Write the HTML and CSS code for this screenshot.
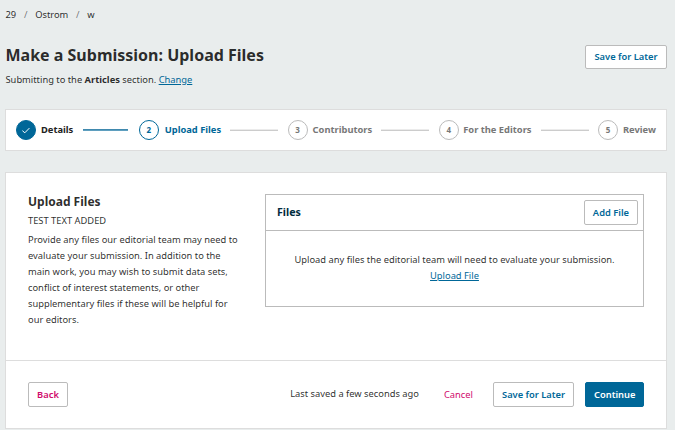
FILE: index.html
```html
<!DOCTYPE html>
<html lang="en">
<head>
<meta charset="utf-8">
<title>Make a Submission</title>
<link rel="stylesheet" href="styles.css">
</head>
<body>
<nav class="crumbs"><span>29</span><span class="sep">/</span><span>Ostrom</span><span class="sep">/</span><span>w</span></nav>
<header class="head">
  <div class="title">
    <h1>Make a Submission: Upload Files</h1>
    <p class="sub">Submitting to the <b>Articles</b> section. <a href="#">Change</a></p>
  </div>
  <button class="btn save-top">Save for Later</button>
</header>
<ol class="steps">
  <li class="step done"><span class="dot"><svg viewBox="0 0 10 10" width="10" height="10"><path d="M1.4 5.7 3.8 7.8 8.4 3.1" fill="none" stroke="#fff" stroke-width="1"/></svg></span><span class="label">Details</span></li>
  <li class="line past"></li>
  <li class="step current"><span class="dot">2</span><span class="label">Upload Files</span></li>
  <li class="line"></li>
  <li class="step"><span class="dot">3</span><span class="label">Contributors</span></li>
  <li class="line"></li>
  <li class="step editors"><span class="dot">4</span><span class="label">For the Editors</span></li>
  <li class="line"></li>
  <li class="step"><span class="dot">5</span><span class="label">Review</span></li>
</ol>
<main class="panel">
  <section class="content">
    <div class="intro">
      <h2>Upload Files</h2>
      <p class="test">TEST TEXT ADDED</p>
      <p>Provide any files our editorial team may need to<br>evaluate your submission. In addition to the<br>main work, you may wish to submit data sets,<br>conflict of interest statements, or other<br>supplementary files if these will be helpful for<br>our editors.</p>
    </div>
    <div class="files">
      <div class="files-head"><h3>Files</h3><button class="btn">Add File</button></div>
      <div class="files-body">Upload any files the editorial team will need to evaluate your submission.<br><a href="#">Upload File</a></div>
    </div>
  </section>
  <footer class="actions">
    <button class="btn back">Back</button>
    <span class="saved">Last saved a few seconds ago</span>
    <button class="cancel">Cancel</button>
    <button class="btn later">Save for Later</button>
    <button class="btn primary">Continue</button>
  </footer>
</main>
</body>
</html>
```
FILE: styles.css
```css
* { box-sizing: border-box; }
body {
  margin: 0;
  padding: 0 8px 0 5px;
  height: 430px;
  overflow: hidden;
  background: #e9eded;
  color: rgba(0, 0, 0, .84);
  font: 9.33px/16px "Noto Sans", sans-serif;
}
h1, h2, h3, p, ol { margin: 0; padding: 0; }
a { color: #006798; text-underline-offset: 1px; }
button { font-family: inherit; white-space: nowrap; }
.crumbs { display: flex; padding: 7px 0 0 .5px; height: 37px; }
.crumbs .sep { width: 19px; text-align: center; color: rgba(0, 0, 0, .54); }
.head { display: flex; justify-content: space-between; align-items: flex-start; height: 72px; }
.title { padding-left: .5px; }
h1 { font-size: 16px; line-height: 24px; padding-top: 6px; }
.sub { padding-top: 5px; }
.btn {
  height: 25px;
  padding: 0 8px;
  border: 1px solid #bbb;
  border-radius: 2px;
  background: #fff;
  color: #006798;
  font-size: 9.33px;
  font-weight: 600;
  line-height: 23px;
}
.save-top { width: 82px; height: 24px; margin-top: 8px; line-height: 22px; }
.steps {
  display: flex;
  align-items: center;
  height: 42px;
  padding: 0 10px;
  border: 1px solid #ddd;
  background: #fff;
  list-style: none;
}
.step { display: flex; align-items: center; color: #777; font-weight: 700; white-space: nowrap; }
.dot {
  display: flex;
  align-items: center;
  justify-content: center;
  width: 20px;
  height: 20px;
  margin-right: 5px;
  border: 1px solid #bbb;
  border-radius: 50%;
  font-size: 8px;
}
.done { color: #222; }
.done .dot { background: #006798; border-color: #006798; }
.current { color: #006798; }
.current .dot { border-color: #006798; margin-right: 6px; }
.editors .dot { margin-right: 4.5px; }
.line { flex: 1; height: 1px; margin: 0 9.5px 0 9px; background: #ccc; box-shadow: 0 -1px rgba(0, 0, 0, .08); }
.past {
  flex: 0 0 45px;
  margin: 0 10.6px 0 9.8px;
  background: #5f9fbf;
  box-shadow: 0 -1px #4089ae;
}
.panel { margin-top: 21px; height: 257px; border: 1px solid #ddd; background: #fff; }
.content { display: flex; height: 188px; padding: 21px 22px 0; border-bottom: 1px solid #ddd; }
.intro { width: 237px; }
h2 { font-size: 12px; line-height: 16px; }
.test { margin: 3px 0; }
.files { flex: 1; height: 113px; border: 1px solid #bbb; }
.files-head {
  display: flex;
  align-items: center;
  justify-content: space-between;
  height: 36px;
  padding: 0 5px 0 11px;
  border-bottom: 1px solid #bbb;
}
h3 { padding-bottom: 1px; font-size: 10.67px; color: #002c40; }
.files-body { padding-top: 21px; text-align: center; }
.actions { display: flex; align-items: center; height: 67px; padding: 0 22px; }
.back { width: 40px; color: #d00a6c; }
.saved { margin-left: auto; padding-bottom: 1px; }
.cancel { margin: 0 20px 0 25px; padding: 0; border: 0; background: none; color: #d00a6c; font-size: 9.33px; }
.later { width: 81px; margin-right: 11px; }
.primary { width: 59px; border-color: #006798; background: #006798; color: #fff; }
```
